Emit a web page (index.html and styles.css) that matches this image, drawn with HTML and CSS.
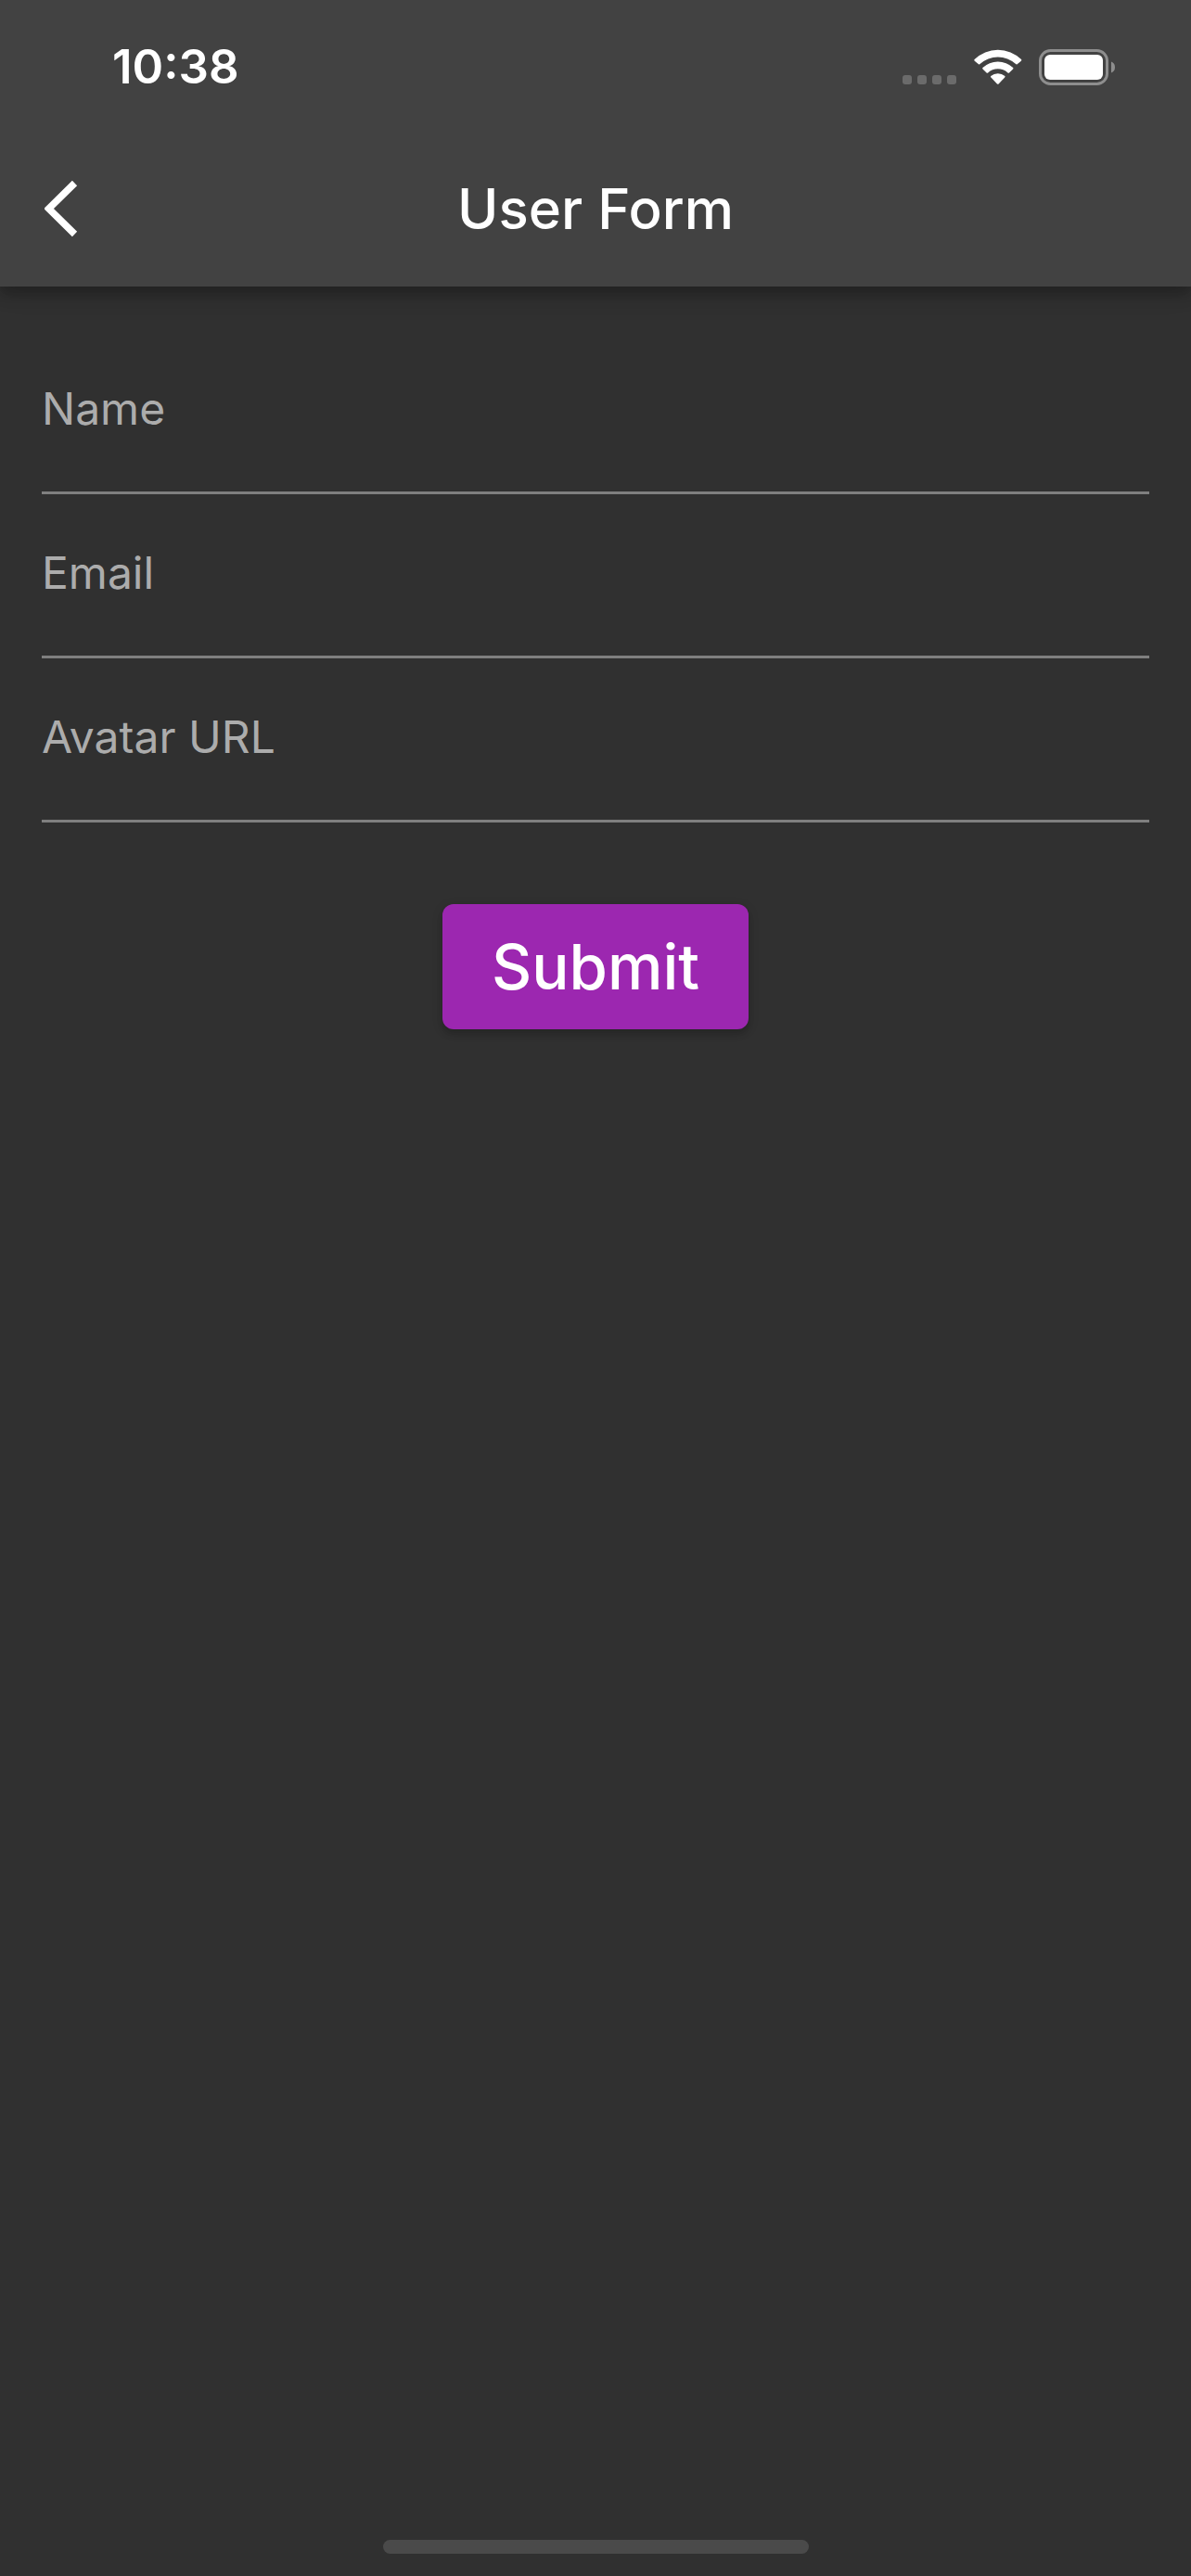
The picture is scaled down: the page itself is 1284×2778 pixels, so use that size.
FILE: index.html
```html
<!DOCTYPE html>
<html lang="en">
<head>
  <meta charset="utf-8">
  <meta name="viewport" content="width=device-width, initial-scale=1">
  <title>User Form</title>
  <link rel="stylesheet" href="styles.css">
</head>
<body class="screen">
  <header class="header">
    <div class="status-bar">
      <time class="clock">10:38</time>
      <div class="status-icons">
        <svg class="status-icon" width="59" height="40" viewBox="0 0 59 40" role="img" aria-label="No cellular signal">
          <g fill="#6b6b6b">
            <rect x="0" y="29" width="10" height="10" rx="3"/>
            <rect x="16" y="29" width="10" height="10" rx="3"/>
            <rect x="32" y="29" width="10" height="10" rx="3"/>
            <rect x="48" y="29" width="10" height="10" rx="3"/>
          </g>
        </svg>
        <svg class="status-icon" width="52" height="40" viewBox="0 0 52 40" role="img" aria-label="Wi-Fi">
          <g fill="#fff">
            <path d="M.6 12.1Q0 12.9.7 13.7L5 17.2Q5.700 17.900 6.500 17.100A28.500 28.500 0 0 1 45.100 17.100Q45.900 17.900 46.600 17.200L50.900 13.700Q51.600 12.900 51 12.100A36 36 0 0 0 .6 12.100Z"/>
            <path d="M9.400 21.100Q8.800 21.900 9.500 22.600L13.600 26.500Q14.300 27.100 15.100 26.400A16 16 0 0 1 36.500 26.400Q37.300 27.100 38 26.500L42.100 22.600Q42.800 21.900 42.200 21.100A24 24 0 0 0 9.400 21.100Z"/>
            <path d="M18.200 30Q17.700 30.800 18.400 31.600L25 38.400Q25.800 39.200 26.600 38.400L33.200 31.600Q33.900 30.800 33.400 30A12 12 0 0 0 18.200 30Z"/>
          </g>
        </svg>
        <svg class="status-icon" width="83" height="40" viewBox="0 0 83 40" role="img" aria-label="Battery full">
          <rect x="1.500" y="2.500" width="72" height="36" rx="11" fill="none" stroke="#8e8e8e" stroke-width="3"/>
          <rect x="6" y="7" width="63" height="27" rx="6" fill="#fff"/>
          <path d="M78 14.500Q82 16 82 20.500T78 26.500Z" fill="#8e8e8e"/>
        </svg>
      </div>
    </div>
    <div class="app-bar">
      <button class="back" type="button" aria-label="Back">
        <svg class="back-icon" width="36" height="62" viewBox="0 0 36 62" aria-hidden="true">
          <path d="M32.500 3.500L4.500 31L32.500 58.500" fill="none" stroke="#fff" stroke-width="7.500"/>
        </svg>
      </button>
      <h1 class="title">User Form</h1>
    </div>
  </header>

  <main class="content">
    <form class="form">
      <div class="field">
        <input class="field-input" id="name" name="name" type="text" placeholder=" ">
        <label class="field-label" for="name">Name</label>
      </div>
      <div class="field">
        <input class="field-input" id="email" name="email" type="email" placeholder=" ">
        <label class="field-label" for="email">Email</label>
      </div>
      <div class="field">
        <input class="field-input" id="avatar" name="avatar" type="url" placeholder=" ">
        <label class="field-label" for="avatar">Avatar URL</label>
      </div>
      <button class="submit" type="submit">Submit</button>
    </form>
  </main>

  <footer class="home-area">
    <div class="home-indicator"></div>
  </footer>
</body>
</html>
```
FILE: styles.css
```css
* {
  box-sizing: border-box;
}

.screen {
  display: flex;
  flex-direction: column;
  min-height: 100vh;
  margin: 0;
  background: #303030;
  color: #fff;
  font-family: Inter, "Liberation Sans", sans-serif;
}

.header {
  background: #424242;
  box-shadow: 0 6px 12px rgba(0, 0, 0, 0.16), 0 10px 15px rgba(0, 0, 0, 0.1), 0 3px 30px rgba(0, 0, 0, 0.1);
}

.status-bar {
  display: flex;
  align-items: center;
  justify-content: space-between;
  height: 141px;
  padding: 3px 81px 0 121px;
}

.clock {
  font-size: 51px;
  font-weight: 600;
  line-height: 60px;
}

.status-icons {
  display: flex;
  gap: 18px;
}

.status-icon,
.back-icon {
  display: block;
}

.app-bar {
  display: grid;
  grid-template-columns: 168px 1fr 168px;
  align-items: center;
  height: 168px;
}

.back {
  height: 168px;
  padding: 0 48px;
  border: 0;
  background: none;
  cursor: pointer;
}

.title {
  margin: 0;
  font-size: 60px;
  font-weight: 500;
  line-height: 72px;
  text-align: center;
}

.content {
  flex: 1;
  padding: 47px 45px;
}

.form {
  display: flex;
  flex-direction: column;
}

.field {
  display: grid;
}

.field-input,
.field-label {
  grid-area: 1 / 1;
  font-size: 48px;
  line-height: 60px;
}

.field-input {
  width: 100%;
  height: 177px;
  padding: 0;
  border: 0;
  border-bottom: 3px solid #7f7f7f;
  border-radius: 0;
  outline: 0;
  background: none;
  color: #fff;
  font-family: inherit;
}

.field-input:focus {
  border-color: #9c27b0;
}

.field-label {
  justify-self: start;
  padding-top: 55px;
  color: #acacac;
  pointer-events: none;
}

.field-input:not(:placeholder-shown) + .field-label {
  padding-top: 0;
  font-size: 36px;
}

.submit {
  align-self: center;
  margin-top: 88px;
  padding: 32px 53px 31px;
  border: 0;
  border-radius: 12px;
  background: #9c27b0;
  box-shadow: 0 6px 6px rgba(0, 0, 0, 0.1), 0 3px 12px rgba(0, 0, 0, 0.16);
  color: #fff;
  font-family: inherit;
  font-size: 67px;
  font-weight: 500;
  line-height: 72px;
  cursor: pointer;
}

.home-area {
  display: flex;
  justify-content: center;
  padding-bottom: 24px;
}

.home-indicator {
  width: 36%;
  max-width: 459px;
  height: 15px;
  border-radius: 8px;
  background: #4a4a4a;
}
```
